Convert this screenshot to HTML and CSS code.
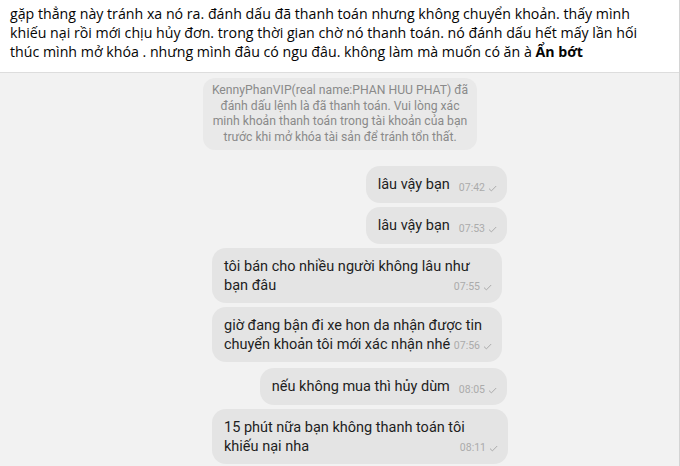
FILE: index.html
```html
<!DOCTYPE html>
<html lang="vi">
<head>
<meta charset="utf-8">
<link rel="stylesheet" href="styles.css">
</head>
<body>
<div class="page">
  <p class="post">gặp thẳng này tránh xa nó ra. đánh dấu đã thanh toán nhưng không chuyển khoản. thấy mình<br>khiếu nại rồi mới chịu hủy đơn. trong thời gian chờ nó thanh toán. nó đánh dấu hết mấy lần hối<br>thúc mình mở khóa . nhưng mình đâu có ngu đâu. không làm mà muốn có ăn à <b class="more">Ẩn bớt</b></p>
  <div class="shot">
    <div class="chat">
      <div class="sys">KennyPhanVIP(real name:PHAN HUU PHAT) đã<br>đánh dấu lệnh là đã thanh toán. Vui lòng xác<br>minh khoản thanh toán trong tài khoản của bạn<br>trước khi mở khóa tài sản để tránh tổn thất.</div>

      <div class="msg out first"><span class="txt">lâu vậy bạn</span><span class="meta">07:42<svg class="tick" viewBox="0 0 9 7"><path d="M1 3.6l2.4 2.3L8.2 1"/></svg></span></div>
      <div class="msg out"><span class="txt">lâu vậy bạn</span><span class="meta">07:53<svg class="tick" viewBox="0 0 9 7"><path d="M1 3.6l2.4 2.3L8.2 1"/></svg></span></div>

      <div class="msg in"><span class="txt">tôi bán cho nhiều người không lâu như<br>bạn đâu</span><span class="meta">07:55<svg class="tick" viewBox="0 0 9 7"><path d="M1 3.6l2.4 2.3L8.2 1"/></svg></span></div>
      <div class="msg in"><span class="txt">giờ đang bận đi xe hon da nhận được tin<br>chuyển khoản tôi mới xác nhận nhé</span><span class="meta">07:56<svg class="tick" viewBox="0 0 9 7"><path d="M1 3.6l2.4 2.3L8.2 1"/></svg></span></div>

      <div class="msg out gap"><span class="txt">nếu không mua thì hủy dùm</span><span class="meta">08:05<svg class="tick" viewBox="0 0 9 7"><path d="M1 3.6l2.4 2.3L8.2 1"/></svg></span></div>

      <div class="msg in wide"><span class="txt">15 phút nữa bạn không thanh toán tôi<br>khiếu nại nha</span><span class="meta">08:11<svg class="tick" viewBox="0 0 9 7"><path d="M1 3.6l2.4 2.3L8.2 1"/></svg></span></div>
    </div>
  </div>
</div>
</body>
</html>
```

FILE: styles.css
```css
html, body {
  margin: 0;
  padding: 0;
  background: #ffffff;
}

.page {
  width: 679px;
  height: 466px;
  border-right: 1px solid #d4d4d4;
  background: #ffffff;
  overflow: hidden;
}

.post {
  margin: 0;
  height: 72px;
  box-sizing: border-box;
  padding: 4px 0 0 10px;
  font-family: "Open Sans", "Noto Sans", sans-serif;
  font-size: 14.2px;
  line-height: 19px;
  color: #050505;
  white-space: nowrap;
}

.more {
  font-weight: 700;
}

.shot {
  border-top: 1px solid #dddddd;
  background: #f2f2f2;
  height: 394px;
  padding-top: 5px;
  box-sizing: border-box;
}

.chat {
  margin-left: 203px;
  width: 305px;
  display: flex;
  flex-direction: column;
}

.sys {
  align-self: flex-start;
  width: 274px;
  box-sizing: border-box;
  padding: 5px 6px;
  border-radius: 12px;
  background: #e9e9e9;
  color: #8a8a8a;
  font-family: Roboto, "Noto Sans", sans-serif;
  font-size: 12.2px;
  line-height: 15.5px;
  text-align: center;
  white-space: nowrap;
}

.msg {
  display: flex;
  align-items: flex-end;
  box-sizing: border-box;
  padding: 9px 10px 8px 12px;
  margin-top: 4px;
  border-radius: 14px;
  background: #e4e4e4;
  color: #1e1e1e;
  font-family: Roboto, "Noto Sans", sans-serif;
  font-size: 14.5px;
  line-height: 20px;
  white-space: nowrap;
}

.out {
  align-self: flex-end;
  margin-right: 1px;
}

.first {
  margin-top: 16px;
}

.gap {
  margin-top: 6px;
}

.in {
  display: grid;
  align-self: flex-start;
  margin-left: 9px;
  width: 290px;
  line-height: 19px;
}

.in .txt,
.in .meta {
  grid-area: 1 / 1;
}

.in .meta {
  justify-self: end;
  align-self: end;
  margin-bottom: 1px;
}

.wide {
  width: 296px;
}

.meta {
  display: flex;
  align-items: center;
  gap: 3px;
  margin-left: 9px;
  font-size: 10.5px;
  line-height: 14px;
  color: #ababab;
}

.tick {
  width: 9px;
  height: 7px;
}

.tick path {
  fill: none;
  stroke: #ababab;
  stroke-width: 1;
}
```
